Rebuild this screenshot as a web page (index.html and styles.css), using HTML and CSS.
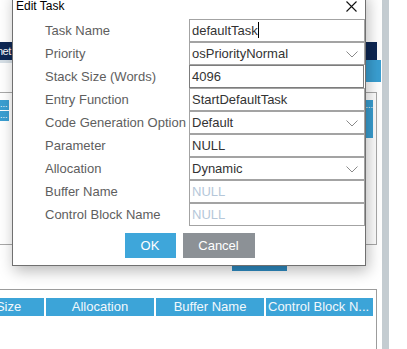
FILE: index.html
```html
<!DOCTYPE html>
<html lang="en">
<head>
  <meta charset="UTF-8">
  <title>Edit Task</title>
  <link rel="stylesheet" href="styles.css">
</head>
<body>
  <div class="app">
    <div class="main">
      <div class="top-gap"></div>
      <div class="nav"><span class="nav-text">net</span></div>
      <div class="tabs">
        <div class="tab-light"></div>
        <div class="tab-on"></div>
      </div>

      <div class="panel">
        <div class="panel-head">
          <div class="stack-cells">
            <div class="cell-sm">...</div>
            <div class="cell-sm">...</div>
          </div>
          <div class="cell-tall">...</div>
        </div>
      </div>

      <div class="back-btn"></div>

      <div class="grid">
        <div class="grid-head">
          <div class="gcell w107">Stack Size</div>
          <div class="gcell w108">Allocation</div>
          <div class="gcell w108">Buffer Name</div>
          <div class="gcell w107 left">Control Block N...</div>
        </div>
      </div>
    </div>
    <div class="scroll"></div>
    <div class="rest"></div>
  </div>

  <!-- dialog over the page -->
  <div class="dialog">
    <div class="titlebar">
      <span class="title">Edit Task</span>
      <span class="close">
        <svg width="11" height="11" viewBox="0 0 11 11"><path d="M0.5 0.5 L10.5 10.5 M10.5 0.5 L0.5 10.5" stroke="#111" stroke-width="1.1" fill="none"/></svg>
      </span>
    </div>

    <div class="form">
      <div class="label">Task Name</div>
      <div class="field">defaultTask<span class="caret"></span></div>

      <div class="label">Priority</div>
      <div class="field select">osPriorityNormal
        <svg class="chev" width="12" height="7" viewBox="0 0 12 7"><path d="M0.5 0.5 L6 6 L11.5 0.5" stroke="#8a8a8a" stroke-width="1" fill="none"/></svg>
      </div>

      <div class="label">Stack Size (Words)</div>
      <div class="field focus">4096</div>

      <div class="label">Entry Function</div>
      <div class="field">StartDefaultTask</div>

      <div class="label">Code Generation Option</div>
      <div class="field select">Default
        <svg class="chev" width="12" height="7" viewBox="0 0 12 7"><path d="M0.5 0.5 L6 6 L11.5 0.5" stroke="#8a8a8a" stroke-width="1" fill="none"/></svg>
      </div>

      <div class="label">Parameter</div>
      <div class="field">NULL</div>

      <div class="label">Allocation</div>
      <div class="field select">Dynamic
        <svg class="chev" width="12" height="7" viewBox="0 0 12 7"><path d="M0.5 0.5 L6 6 L11.5 0.5" stroke="#8a8a8a" stroke-width="1" fill="none"/></svg>
      </div>

      <div class="label">Buffer Name</div>
      <div class="field disabled">NULL</div>

      <div class="label">Control Block Name</div>
      <div class="field disabled">NULL</div>
    </div>

    <div class="buttons">
      <div class="btn ok">OK</div>
      <div class="btn cancel">Cancel</div>
    </div>
  </div>
</body>
</html>
```

FILE: styles.css
```css
body {
  margin: 0;
  font-family: 'Liberation Sans', Arial, sans-serif;
  background: #fff;
  overflow: hidden;
}

.app {
  display: flex;
  height: 349px;
}

.main {
  width: 382px;
  flex: none;
  overflow: hidden;
}

.scroll {
  width: 7px;
  flex: none;
  background: #c4ccd1;
}

.rest {
  flex: 1;
  background: #fff;
}

.top-gap {
  height: 42px;
}

.nav {
  width: 377px;
  height: 18px;
  background: #0d2754;
  color: #fff;
  font-size: 11px;
  line-height: 18px;
  white-space: nowrap;
}

.nav-text {
  margin-left: -3px;
  letter-spacing: -0.5px;
}

.tabs {
  display: flex;
  width: 381px;
  height: 22px;
}

.tab-light {
  flex: 1;
  border-top: 3px solid #d6dfe6;
}

.tab-on {
  width: 90px;
  background: #3a9fd2;
}

.panel {
  margin-top: 10px;
  width: 376px;
  height: 144px;
  padding-top: 7px;
  border: 1px solid #a8a8a8;
  border-left: none;
}

.panel-head {
  display: flex;
  justify-content: space-between;
  padding-right: 3px;
}

.stack-cells {
  display: flex;
  flex-direction: column;
  gap: 1px;
}

.cell-sm {
  width: 9px;
  height: 10px;
  background: #3a9fd2;
  color: #fff;
  font-size: 9px;
  line-height: 8px;
  overflow: hidden;
}

.cell-tall {
  width: 108px;
  height: 38px;
  background: #3a9fd2;
  color: #fff;
  font-size: 9px;
  text-align: right;
}

.back-btn {
  margin: 6px 0 0 232px;
  width: 55px;
  height: 20px;
  background: #2e8cc3;
}

.grid {
  margin-top: 18px;
  width: 376px;
  height: 51px;
  padding-top: 8px;
  border-top: 1px solid #9c9c9c;
  border-right: 1px solid #9c9c9c;
}

.grid-head {
  display: flex;
  gap: 2px;
  margin-left: -63px;
}

.gcell {
  flex: none;
  height: 18px;
  line-height: 18px;
  background: #3ca4d8;
  color: #f2f8fc;
  font-size: 13px;
  text-align: center;
  white-space: nowrap;
  overflow: hidden;
}

.gcell.left {
  text-align: left;
  padding-left: 2px;
  box-sizing: border-box;
}

.w107 { width: 107px; }
.w108 { width: 108px; }

/* dialog */
.dialog {
  position: absolute;
  left: 12px;
  top: -8px;
  width: 352px;
  background: #fff;
  border: 1px solid #707070;
  box-shadow: 2px 5px 14px rgba(0, 0, 0, 0.28);
}

.titlebar {
  display: flex;
  justify-content: space-between;
  align-items: center;
  height: 26px;
}

.title {
  padding-left: 3px;
  font-size: 12px;
  color: #000;
}

.close {
  width: 28px;
  display: flex;
  justify-content: center;
  align-items: center;
}

.form {
  display: grid;
  grid-template-columns: 176px 176px;
  grid-auto-rows: 23px;
}

.label {
  padding-left: 32px;
  font-size: 13px;
  line-height: 23px;
  color: #5e5e5e;
  white-space: nowrap;
}

.field {
  position: relative;
  box-sizing: border-box;
  height: 23px;
  padding-left: 2px;
  border: 1px solid #a3a3a3;
  font-size: 13px;
  line-height: 21px;
  color: #333;
  white-space: nowrap;
}

.field.focus {
  border-color: #7c7c7c;
  margin-right: 1px;
}

.field.disabled {
  color: #b5c7d9;
}

.caret {
  display: inline-block;
  width: 1px;
  height: 16px;
  background: #000;
  vertical-align: -3px;
}

.chev {
  position: absolute;
  right: 6px;
  top: 8px;
}

.buttons {
  display: flex;
  justify-content: center;
  gap: 7px;
  padding: 7px 0 7px 1px;
}

.btn {
  height: 25px;
  line-height: 25px;
  font-size: 13px;
  color: #fff;
  text-align: center;
}

.btn.ok {
  width: 51px;
  background: #3ea6da;
}

.btn.cancel {
  width: 72px;
  background: #8c9196;
}
```
